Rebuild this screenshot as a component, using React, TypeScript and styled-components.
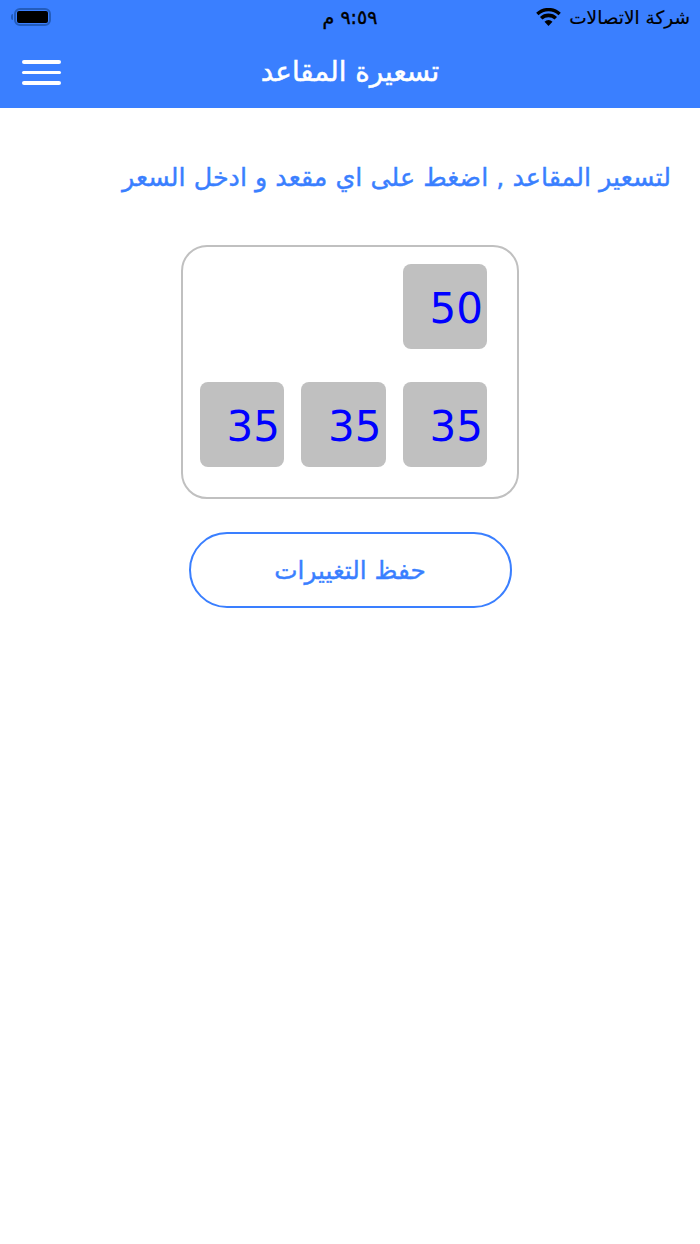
import styled, { createGlobalStyle } from "styled-components";

const GlobalStyle = createGlobalStyle`
  html, body {
    margin: 0;
    padding: 0;
    background: #fff;
    font-family: "DejaVu Sans", "Noto Sans", sans-serif;
  }
`;

const Page = styled.div`
  width: 700px;
  height: 1244px;
  display: flex;
  flex-direction: column;
  background: #fff;
`;

const Header = styled.header`
  height: 108px;
  background: #3a7fff;
  display: flex;
  flex-direction: column;
`;

const StatusBar = styled.div`
  height: 34px;
  display: grid;
  grid-template-columns: 1fr auto 1fr;
  align-items: center;
  padding: 0 10px;
  color: #000;
`;

const Battery = styled.div`
  position: relative;
  width: 37px;
  height: 18px;
  box-sizing: border-box;
  margin-left: 4px;
  border: 2px solid #235cbc;
  border-radius: 6px;
  padding: 1px;
  display: flex;
  justify-self: start;

  &::before {
    content: "";
    position: absolute;
    left: -5px;
    top: 4px;
    width: 2px;
    height: 6px;
    background: #235cbc;
    border-radius: 2px 0 0 2px;
  }
`;

const BatteryFill = styled.div`
  flex: 1;
  background: #000;
  border-radius: 2px;
`;

const Clock = styled.div`
  font-size: 19px;
  direction: rtl;
  -webkit-text-stroke: 0.4px #000;
`;

const Carrier = styled.div`
  justify-self: end;
  display: flex;
  align-items: center;
  gap: 8px;
  font-size: 18.5px;
  direction: rtl;
  -webkit-text-stroke: 0.2px #000;
`;

const TitleBar = styled.div`
  flex: 1;
  position: relative;
  display: flex;
  align-items: center;
  justify-content: center;
`;

const Title = styled.h1`
  margin: 0;
  color: #fff;
  font-size: 27.7px;
  font-weight: 400;
  direction: rtl;
  -webkit-text-stroke: 0.5px #fff;
`;

const MenuButton = styled.div`
  position: absolute;
  left: 22px;
  top: 26px;
  width: 39px;
  display: flex;
  flex-direction: column;
  gap: 7px;
`;

const MenuLine = styled.span`
  height: 3.5px;
  background: #fff;
  border-radius: 2px;
`;

const Content = styled.main`
  display: flex;
  flex-direction: column;
  align-items: center;
`;

const Hint = styled.p`
  align-self: stretch;
  margin: 51px 29px 0 0;
  color: #3a7fff;
  font-size: 25.4px;
  line-height: 36px;
  direction: rtl;
  text-align: right;
  -webkit-text-stroke: 0.4px #3a7fff;
`;

const SeatCard = styled.div`
  box-sizing: border-box;
  width: 338px;
  height: 254px;
  margin-top: 50px;
  border: 2px solid #c0c0c0;
  border-radius: 26px;
  padding: 17px 30px 0 16px;
  display: grid;
  grid-template-columns: repeat(3, 84.5px);
  grid-auto-rows: 84.5px;
  column-gap: 17px;
  row-gap: 33.5px;
  direction: rtl;
`;

const Seat = styled.div<{ $column?: number }>`
  grid-column: ${(p) => p.$column ?? "auto"};
  background: #c0c0c0;
  border-radius: 8px;
  color: #0000ff;
  font-size: 42px;
  line-height: 89px;
  text-align: right;
  padding-right: 4px;
  direction: ltr;
`;

const SaveButton = styled.button`
  box-sizing: border-box;
  width: 323px;
  height: 76px;
  margin-top: 33px;
  border: 2px solid #3a7fff;
  border-radius: 38px;
  background: #fff;
  color: #3a7fff;
  font-family: inherit;
  font-size: 24.7px;
  direction: rtl;
  -webkit-text-stroke: 0.4px #3a7fff;
`;

const WifiIcon = () => (
  <svg width="25" height="18" viewBox="0 0 26 19">
    <path d="M13 19l-4.2-4.6a6 6 0 0 1 8.4 0z" fill="#000" />
    <path d="M6.6 12.2l-2.6-2.8a13 13 0 0 1 18 0l-2.6 2.8a9.3 9.3 0 0 0-12.8 0z" fill="#000" />
    <path d="M2.4 7.6L0 5a19 19 0 0 1 26 0l-2.4 2.6a15.5 15.5 0 0 0-21.2 0z" fill="#000" />
  </svg>
);

export default function App() {
  return (
    <Page>
      <GlobalStyle />
      <Header>
        <StatusBar>
          <Battery>
            <BatteryFill />
          </Battery>
          <Clock>٩:٥٩ م</Clock>
          <Carrier>
            <span>شركة الاتصالات</span>
            <WifiIcon />
          </Carrier>
        </StatusBar>
        <TitleBar>
          <MenuButton>
            <MenuLine />
            <MenuLine />
            <MenuLine />
          </MenuButton>
          <Title>تسعيرة المقاعد</Title>
        </TitleBar>
      </Header>
      <Content>
        <Hint>لتسعير المقاعد , اضغط على اي مقعد و ادخل السعر</Hint>
        <SeatCard>
          <Seat>50</Seat>
          <Seat $column={1}>35</Seat>
          <Seat>35</Seat>
          <Seat>35</Seat>
        </SeatCard>
        <SaveButton>حفظ التغييرات</SaveButton>
      </Content>
    </Page>
  );
}
